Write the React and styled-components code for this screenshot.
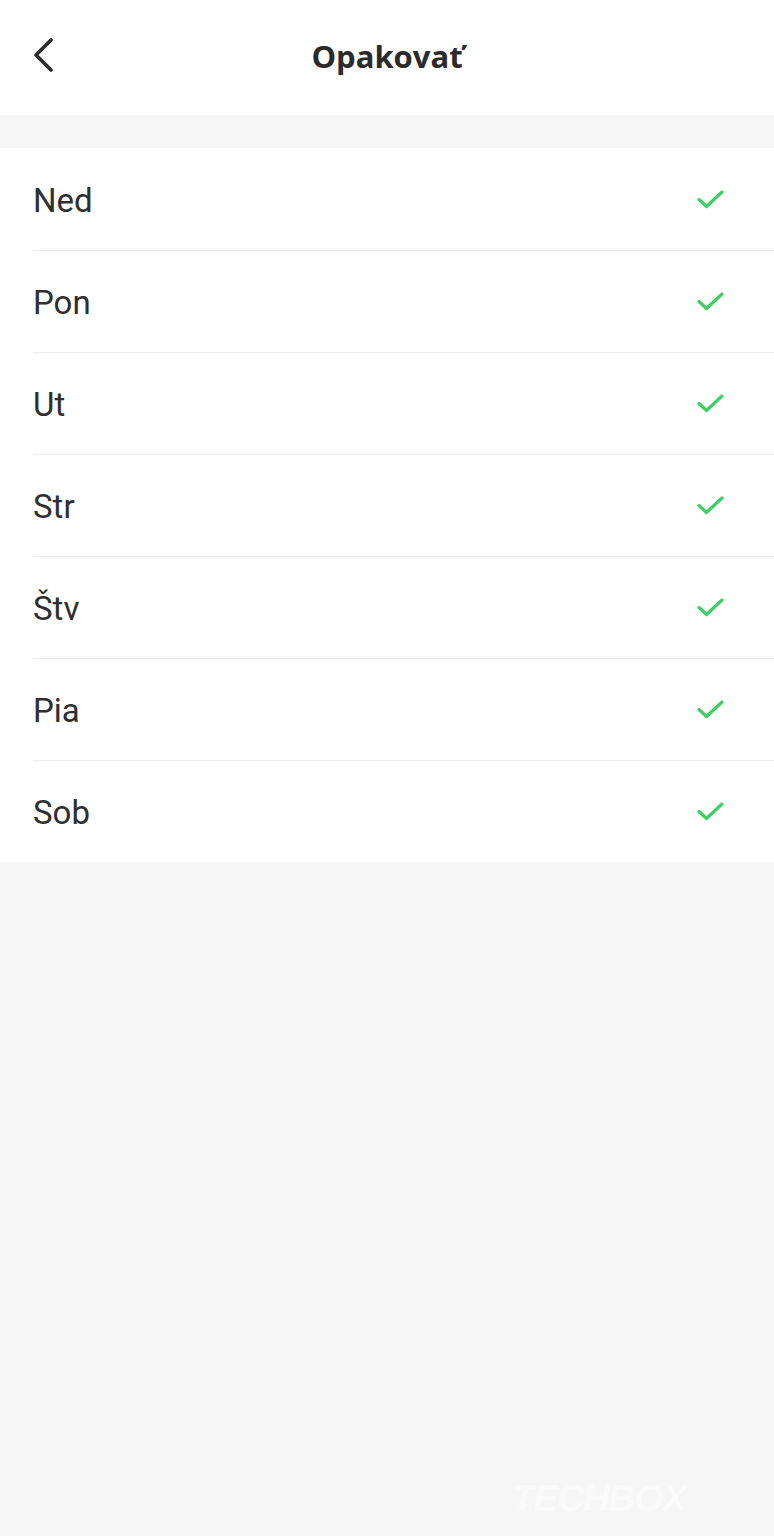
import React from 'react';
import styled, { createGlobalStyle } from 'styled-components';

const GlobalStyle = createGlobalStyle`
  html, body {
    margin: 0;
    padding: 0;
    background: #f6f6f6;
  }
  body {
    font-family: Roboto, "Noto Sans", "Liberation Sans", sans-serif;
  }
`;

const DAYS = ['Ned', 'Pon', 'Ut', 'Str', 'Štv', 'Pia', 'Sob'];

const Page = styled.div`
  position: relative;
  width: 774px;
  min-height: 1536px;
  background: #f6f6f6;
  display: flex;
  flex-direction: column;
`;

const Header = styled.header`
  height: 115px;
  background: #fff;
  display: flex;
  align-items: center;
  position: relative;
  justify-content: center;
`;

const BackButton = styled.button`
  position: absolute;
  left: 32px;
  top: 37px;
  width: 24px;
  height: 36px;
  border: 0;
  padding: 0;
  background: none;
  display: block;
  cursor: pointer;

  svg {
    display: block;
  }
`;

const Title = styled.h1`
  margin: 0;
  font-family: "Open Sans", Roboto, sans-serif;
  font-size: 31px;
  font-weight: 700;
  color: #2b2b2b;
  letter-spacing: 0;
  padding-bottom: 4px;
`;

const Spacer = styled.div`
  height: 33px;
`;

const List = styled.ul`
  list-style: none;
  margin: 0;
  padding: 0;
  background: #fff;
`;

const Row = styled.li`
  height: 102px;
  display: flex;
  align-items: center;
  justify-content: space-between;
  padding: 0 48px 0 33px;
  position: relative;
  box-sizing: border-box;

  & + &::before {
    content: '';
    position: absolute;
    top: 0;
    left: 33px;
    right: 0;
    height: 1px;
    background: #ececec;
  }
`;

const Label = styled.span`
  font-size: 33px;
  color: #2f2f2f;
  font-weight: 400;
  padding-top: 2px;
`;

const Watermark = styled.div`
  position: absolute;
  left: 512px;
  top: 1478px;
  font-family: "Liberation Sans", Arial, sans-serif;
  font-weight: 700;
  font-style: italic;
  font-size: 37px;
  color: #fafafa;
  letter-spacing: -1px;
`;

const Chevron = () => (
  <svg width="24" height="36" viewBox="0 0 24 36" fill="none">
    <path d="M19 3 L4 18 L19 33" stroke="#2d2d2d" strokeWidth="3.8" strokeLinecap="round" strokeLinejoin="round" />
  </svg>
);

const Check = () => (
  <svg width="30" height="24" viewBox="0 0 30 24" fill="none">
    <path d="M3 12.5 L10.5 19.5 L26 5" stroke="#3ecf62" strokeWidth="3.2" strokeLinecap="round" strokeLinejoin="round" />
  </svg>
);

export default function App() {
  return (
    <Page>
      <GlobalStyle />
      <Header>
        <BackButton aria-label="Späť">
          <Chevron />
        </BackButton>
        <Title>Opakovať</Title>
      </Header>
      <Spacer />
      <List>
        {DAYS.map((d) => (
          <Row key={d}>
            <Label>{d}</Label>
            <Check />
          </Row>
        ))}
      </List>
      <Watermark>TECHBOX</Watermark>
    </Page>
  );
}
